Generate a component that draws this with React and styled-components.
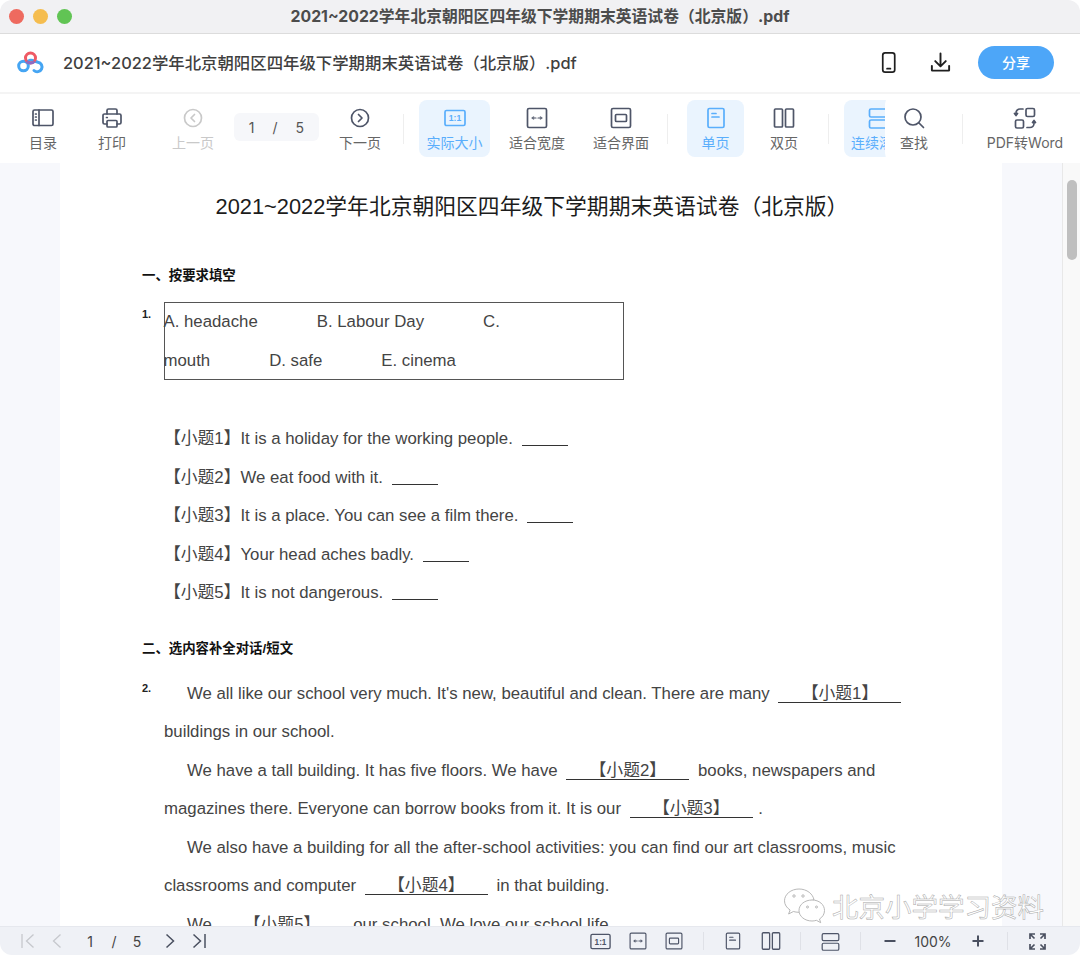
import React from 'react';
import styled, { createGlobalStyle } from 'styled-components';

const Global = createGlobalStyle`
  html, body { margin: 0; padding: 0; background: #fff; }
  * { box-sizing: border-box; }
`;

const UI = `Inter, "Noto Sans CJK SC", sans-serif`;
const DOC = `"Liberation Sans", "Noto Sans CJK SC", sans-serif`;
const INK = '#4e5568';
const BLUE = '#5aaefc';

const Win = styled.div`
  width: 1080px; height: 955px; display: flex; flex-direction: column;
  border-radius: 12px; overflow: hidden; background: #fff; font-family: ${UI}; position: relative;
`;
const TitleBar = styled.div`
  height: 34px; flex: none; background: #f1f1f3; border-bottom: 1px solid #dcdcdc;
  display: flex; align-items: center; justify-content: center; position: relative;
  font-size: 15.8px; font-weight: 700; color: #4c4c4c; padding-bottom: 2px;
`;
const Lights = styled.div`
  position: absolute; left: 9px; top: 9px; display: flex; gap: 9px;
`;
const Light = styled.span`
  width: 15px; height: 15px; border-radius: 50%; background: ${p => p.$c};
`;
const Header = styled.div`
  height: 60px; flex: none; display: flex; align-items: center; padding: 0 26px 2px 16px;
  border-bottom: 2px solid #f4f4f4;
`;
const DocName = styled.div`
  font-size: 16.4px; font-weight: 500; color: #3f3f3f; margin-left: 18px; flex: 1;
`;
const HeadIcon = styled.div`
  width: 52px; display: flex; justify-content: center; align-items: center;
`;
const ShareBtn = styled.button`
  width: 76px; height: 33px; margin-left: 12px; border: 0; border-radius: 17px; background: #4da6f8;
  color: #fff; font: 500 14px ${UI};
`;
const Toolbar = styled.div`
  height: 69px; flex: none; display: flex; position: relative; background: #fff;
`;
const ToolScroll = styled.div`
  width: 895px; flex: none; display: flex; align-items: center; padding-left: 14px; overflow: hidden;
`;
const ToolRight = styled.div`
  width: 195px; flex: none; margin-left: -10px; display: flex; align-items: center; background: #fff;
  border-radius: 10px 0 0 10px; position: relative;
`;
const Tool = styled.div`
  width: ${p => p.$w}px; height: 57px; flex: none; border-radius: 8px;
  display: flex; flex-direction: column; align-items: center; padding-top: 6px; gap: 3px;
  background: ${p => (p.$on ? '#eaf4fe' : 'transparent')};
  color: ${p => (p.$on ? BLUE : p.$off ? '#c9c9c9' : '#666')};
  font-size: 14px; line-height: 20px; white-space: nowrap;
  svg { flex: none; }
`;
const ToolDiv = styled.span`
  width: 1px; height: 30px; flex: none; background: #eee; margin: 0 ${p => p.$r}px 0 ${p => p.$l}px;
`;
const Pager = styled.div`
  width: 85px; height: 28px; flex: none; margin-top: -3px; border-radius: 6px; background: #f6f7fa;
  display: flex; justify-content: center; gap: 18px; align-items: center; font-size: 14px; color: #555;
`;
const Main = styled.div`
  flex: 1; min-height: 0; display: flex; background: #f7f8fc; overflow: hidden; position: relative;
`;
const Gutter = styled.div`
  width: ${p => p.$w}px; flex: none;
`;
const Page = styled.div`
  width: 942px; flex: none; background: #fff; padding: 27px 100px 0 82px; font-family: ${DOC}; color: #444;
  font-size: 16.8px;
`;
const DocTitle = styled.h1`
  margin: 0 -10px 41px 10px; font: 400 21.8px/34px ${DOC}; color: #1c1c1c; text-align: center; white-space: nowrap;
`;
const Heading = styled.h2`
  margin: ${p => p.$top || 0}px 0 0; font: 700 13.4px/22px ${DOC}; color: #111;
`;
const Item = styled.div`
  display: grid; grid-template-columns: 22px 1fr; margin-top: ${p => p.$top}px;
`;
const Num = styled.span`
  font: 700 11px/16px ${DOC}; color: #222; padding-top: ${p => p.$pad}px;
`;
const Box = styled.div`
  width: 460px; height: 78px; border: 1.5px solid #555; margin-bottom: 40px;
`;
const OptRow = styled.div`
  display: flex; gap: 59px; height: 38.5px; line-height: 37px; white-space: nowrap; margin-left: -1.5px;
`;
const Line = styled.div`
  height: 38.5px; line-height: 38.5px; white-space: nowrap; padding-left: ${p => p.$in || 0}px;
`;
const Blank = styled.span`
  display: inline-block; width: ${p => p.$w}px; height: 18px; line-height: 18px; border-bottom: 1.5px solid #333;
  margin: 0 ${p => p.$r ?? 0}px 0 ${p => p.$l ?? 4}px; text-align: center;
  &:empty { vertical-align: -2px; }
`;
const Track = styled.div`
  width: 18px; flex: none; background: #f9f9f9; border-left: 1px solid #e8e8e8; padding: 17px 0 0 4px;
`;
const Thumb = styled.div`
  width: 10px; height: 80px; border-radius: 5px; background: #bfbfbf;
`;
const Watermark = styled.div`
  position: absolute; right: 36px; bottom: 1px; display: flex; align-items: center; gap: 5px;
  font: 400 26.5px/34px "Noto Sans CJK SC", sans-serif; color: #fff; -webkit-text-stroke: 0.5px #a8a8a8;
`;
const Footer = styled.div`
  height: 29px; flex: none; background: #eff1f6; border-top: 1px solid #e6e8ee; display: flex;
  justify-content: space-between; align-items: center; padding: 0 20px 0 14px; font-size: 14px; color: #444;
`;
const FootGroup = styled.div`
  display: flex; align-items: center;
`;
const Slot = styled.div`
  width: ${p => p.$w}px; flex: none; display: flex; justify-content: center; align-items: center;
`;
const FootDiv = styled.span`
  width: 1px; height: 18px; background: #dfe1e7;
`;

const S = ({ s = 24, c = INK, w = 1.7, vb = 24, children }) => (
  <svg width={s} height={s} viewBox={`0 0 ${vb} ${vb}`} fill="none" stroke={c} strokeWidth={w} strokeLinecap="round" strokeLinejoin="round">{children}</svg>
);

const IconToc = (p) => <S {...p}><rect x="2" y="4" width="20" height="15.5" rx="1.5"/><path d="M8 4v15.5"/><path d="M4.5 8h.8M4.5 11h.8M4.5 14h.8"/></S>;
const IconPrint = (p) => <S {...p}><path d="M7 8V4.5A1.5 1.5 0 0 1 8.5 3h7A1.5 1.5 0 0 1 17 4.5V8"/><path d="M7 18H4.5A1.5 1.5 0 0 1 3 16.500v-7A1.5 1.5 0 0 1 4.500 8h15A1.5 1.5 0 0 1 21 9.500v7a1.5 1.5 0 0 1-1.500 1.500H17"/><rect x="7" y="14.500" width="10" height="6.500" rx="1"/><path d="M6.500 11.500h.8"/></S>;
const IconCircleL = (p) => <S {...p}><circle cx="12" cy="12" r="8.500"/><path d="M13.500 8.500 10 12l3.500 3.500"/></S>;
const IconCircleR = (p) => <S {...p}><circle cx="12" cy="12" r="8.500"/><path d="M10.500 8.500 14 12l-3.500 3.500"/></S>;
const IconActual = ({ c = INK, s = 24, w = 1.7 }) => (
  <svg width={s} height={s} viewBox="0 0 24 24" fill="none">
    <rect x="2" y="4.500" width="20" height="15" rx="1.500" stroke={c} strokeWidth={w}/>
    <text x="12" y="15.200" textAnchor="middle" fontFamily={DOC} fontSize="8.600" fontWeight="700" fill={c}>1:1</text>
  </svg>
);
const IconWidth = ({ c = INK, s = 24, w = 1.7 }) => (
  <S s={s} c={c} w={w}>
    <rect x="2.500" y="2.500" width="19" height="19" rx="1.500"/>
    <path d="M8.500 12h2.500M13 12h2.500" strokeWidth="1.200"/>
    <path d="M8.500 10.600 6.500 12l2 1.400ZM15.500 10.600l2 1.400-2 1.400Z" fill={c} strokeWidth="0.400"/>
  </S>
);
const IconFit = ({ c = INK, s = 24, w = 1.7 }) => (
  <S s={s} c={c} w={w}><rect x="2.500" y="2.500" width="19" height="19" rx="1.500"/><rect x="6.500" y="8.500" width="11" height="7" rx="1"/></S>
);
const IconSingle = (p) => <S {...p}><rect x="4" y="2.500" width="16" height="19" rx="1.500"/><path d="M8 7.500h4M8 11h7"/></S>;
const IconDouble = (p) => <S {...p}><rect x="2.500" y="3" width="8" height="18" rx="1"/><rect x="13.500" y="3" width="8" height="18" rx="1"/></S>;
const IconCont = (p) => <S {...p}><rect x="2.500" y="3" width="19" height="8" rx="1.500"/><rect x="2.500" y="14" width="19" height="8" rx="1.500"/></S>;
const IconSearch = (p) => <S {...p}><circle cx="11" cy="11" r="8"/><path d="m17 17 4.500 4.500"/></S>;
const IconConvert = (p) => (
  <S {...p}>
    <rect x="13" y="2.500" width="8.500" height="8" rx="1.500"/>
    <rect x="2.500" y="14" width="8" height="8" rx="1.500"/>
    <path d="M10 3H7a4 4 0 0 0-4 4v2M1.500 7.500 3 9.500l1.500-2"/>
    <path d="M14 21.500h3a4 4 0 0 0 4-4V15M19.500 16.500 21 14.500l1.500 2"/>
  </S>
);
const IconPhone = () => <S s={23} c="#1f1f1f" w={1.8}><rect x="6" y="2" width="12.500" height="20" rx="2.500"/><path d="M10.500 18.500h3.500"/></S>;
const IconDownload = () => <S s={23} c="#1f1f1f" w={2}><path d="M12 2.500v13M6.500 10.500 12 16l5.500-5.500"/><path d="M3 15.500v4.500a.5.5 0 0 0 .5.5h17a.5.5 0 0 0 .5-.5v-4.500"/></S>;

const Logo = () => (
  <svg width="29" height="26" viewBox="0 0 29 26" fill="none">
    <circle cx="7.500" cy="17" r="4.800" stroke="#45a5f3" strokeWidth="3"/>
    <path d="M11 13.500a5 5 0 0 1 7-1.500l4 1.200a4.800 4.800 0 1 1-4 8.300" stroke="#45a5f3" strokeWidth="3" strokeLinecap="round"/>
    <circle cx="14.500" cy="9" r="5" stroke="#ef5a64" strokeWidth="3"/>
    <path d="M10.500 12.500a6 6 0 0 0 8 0" stroke="#8c6bc4" strokeWidth="3"/>
  </svg>
);

const Wechat = () => (
  <svg width="44" height="38" viewBox="0 0 44 38" fill="#fff" stroke="#b0b0b0" strokeWidth="0.900">
    <path d="M16 2C8 2 1.500 7.300 1.500 13.800c0 3.800 2.200 7 5.600 9.200L5.600 27l4.800-2.500c1.700.5 3.500.8 5.600.8.600 0 1.200 0 1.800-.1C17 24 24 13 31 13 30 7 24 2 16 2Z"/>
    <path d="M29 13c-7.200 0-13 4.600-13 10.500S21.800 34 29 34c1.500 0 3-.2 4.400-.7l4.300 2.400-1.200-3.700c3.200-2 5-5 5-8.500C41.500 17.600 36.200 13 29 13Z"/>
    <circle cx="11" cy="9" r="1.200"/><circle cx="20" cy="9" r="1.200"/><circle cx="24.500" cy="20" r="1"/><circle cx="33.500" cy="20" r="1"/>
  </svg>
);

const FirstIco = ({ c }) => <svg width="16" height="16" viewBox="0 0 16 16" fill="none" stroke={c} strokeWidth="1.300"><path d="M2 1v14M13.500 1.500 6.500 8l7 6.500"/></svg>;
const PrevIco = ({ c }) => <svg width="14" height="16" viewBox="0 0 14 16" fill="none" stroke={c} strokeWidth="1.300"><path d="M10.500 1.500 3.500 8l7 6.500"/></svg>;
const NextIco = ({ c }) => <svg width="14" height="16" viewBox="0 0 14 16" fill="none" stroke={c} strokeWidth="1.500"><path d="M3.500 1.500 10.500 8l-7 6.500"/></svg>;
const LastIco = ({ c }) => <svg width="16" height="16" viewBox="0 0 16 16" fill="none" stroke={c} strokeWidth="1.500"><path d="M2.500 1.500 9.500 8l-7 6.500M14 1v14"/></svg>;
const Minus = () => <svg width="14" height="14" viewBox="0 0 14 14" stroke="#4a5060" strokeWidth="2"><path d="M1.500 7h11"/></svg>;
const Plus = () => <svg width="14" height="14" viewBox="0 0 14 14" stroke="#4a5060" strokeWidth="2"><path d="M1.500 7h11M7 1.500v11"/></svg>;
const Full = () => (
  <svg width="17" height="17" viewBox="0 0 17 17" fill="none" stroke="#4a5060" strokeWidth="1.700">
    <path d="M1 6V1h5M1.500 1.500l4 4M16 6V1h-5M15.500 1.500l-4 4M1 11v5h5M1.500 15.500l4-4M16 11v5h-5M15.500 15.500l-4-4"/>
  </svg>
);

export default function App() {
  const name = '2021~2022学年北京朝阳区四年级下学期期末英语试卷（北京版）';
  return (
    <Win>
      <Global />
      <TitleBar>
        <Lights>
          <Light $c="#ee6a5f" /><Light $c="#f5bd4f" /><Light $c="#61c454" />
        </Lights>
        {name}.pdf
      </TitleBar>
      <Header>
        <Logo />
        <DocName>{name}.pdf</DocName>
        <HeadIcon><IconPhone /></HeadIcon>
        <HeadIcon><IconDownload /></HeadIcon>
        <ShareBtn>分享</ShareBtn>
      </Header>
      <Toolbar>
        <ToolScroll>
          <Tool $w={58}><IconToc />目录</Tool>
          <Tool $w={80}><IconPrint />打印</Tool>
          <Tool $w={82} $off><IconCircleL c="#c9c9c9" />上一页</Tool>
          <Pager><span>1</span><span>/</span><span>5</span></Pager>
          <Tool $w={82}><IconCircleR />下一页</Tool>
          <ToolDiv $l={2} $r={15} />
          <Tool $w={71} $on><IconActual c={BLUE} />实际大小</Tool>
          <Tool $w={94}><IconWidth />适合宽度</Tool>
          <Tool $w={74}><IconFit />适合界面</Tool>
          <ToolDiv $l={9} $r={19} />
          <Tool $w={57} $on><IconSingle c={BLUE} />单页</Tool>
          <Tool $w={80}><IconDouble />双页</Tool>
          <ToolDiv $l={4} $r={15} />
          <Tool $w={70} $on><IconCont c={BLUE} />连续滚动</Tool>
        </ToolScroll>
        <ToolRight>
          <Tool $w={58}><IconSearch />查找</Tool>
          <ToolDiv $l={19} $r={17} />
          <Tool $w={90}><IconConvert />PDF转Word</Tool>
        </ToolRight>
      </Toolbar>
      <Main>
        <Gutter $w={60} />
        <Page>
          <DocTitle>{name}</DocTitle>
          <Heading>一、按要求填空</Heading>
          <Item $top={15}>
            <Num $pad={4}>1.</Num>
            <div>
              <Box>
                <OptRow><span>A. headache</span><span>B. Labour Day</span><span>C.</span></OptRow>
                <OptRow><span>mouth</span><span>D. safe</span><span>E. cinema</span></OptRow>
              </Box>
              <Line>【小题1】It is a holiday for the working people. <Blank $w={46} /></Line>
              <Line>【小题2】We eat food with it. <Blank $w={46} /></Line>
              <Line>【小题3】It is a place. You can see a film there. <Blank $w={46} /></Line>
              <Line>【小题4】Your head aches badly. <Blank $w={46} /></Line>
              <Line>【小题5】It is not dangerous. <Blank $w={46} /></Line>
            </div>
          </Item>
          <Heading $top={25}>二、选内容补全对话/短文</Heading>
          <Item $top={15}>
            <Num $pad={5}>2.</Num>
            <div>
              <Line $in={23}>We all like our school very much. It's new, beautiful and clean. There are many <Blank $w={123} $l={4} $r={0}>【小题1】</Blank></Line>
              <Line>buildings in our school.</Line>
              <Line $in={23}>We have a tall building. It has five floors. We have <Blank $w={123} $r={4}>【小题2】</Blank> books, newspapers and</Line>
              <Line>magazines there. Everyone can borrow books from it. It is our <Blank $w={123} $r={1}>【小题3】</Blank> .</Line>
              <Line $in={23}>We also have a building for all the after-school activities: you can find our art classrooms, music</Line>
              <Line>classrooms and computer <Blank $w={123} $r={4}>【小题4】</Blank> in that building.</Line>
              <Line $in={23}>We <Blank $w={123} $l={4} $r={5}>【小题5】</Blank> our school. We love our school life.</Line>
            </div>
          </Item>
        </Page>
        <Gutter $w={60} />
        <Track><Thumb /></Track>
        <Watermark><Wechat />北京小学学习资料</Watermark>
      </Main>
      <Footer>
        <FootGroup>
          <Slot $w={28}><FirstIco c="#c6c8cd" /></Slot>
          <Slot $w={30}><PrevIco c="#c6c8cd" /></Slot>
          <Slot $w={36}>1</Slot>
          <Slot $w={12}>/</Slot>
          <Slot $w={34}>5</Slot>
          <Slot $w={32}><NextIco c="#4a5060" /></Slot>
          <Slot $w={26}><LastIco c="#4a5060" /></Slot>
        </FootGroup>
        <FootGroup>
          <Slot $w={37}><IconActual s={23} w={1.4} /></Slot>
          <Slot $w={37}><IconWidth s={20} w={1.4} /></Slot>
          <Slot $w={36}><IconFit s={20} w={1.4} /></Slot>
          <Slot $w={22}><FootDiv /></Slot>
          <Slot $w={38}><IconSingle s={20} w={1.4} /></Slot>
          <Slot $w={38}><IconDouble s={22} w={1.4} /></Slot>
          <Slot $w={20}><FootDiv /></Slot>
          <Slot $w={40}><IconCont s={21} w={1.4} /></Slot>
          <Slot $w={20}><FootDiv /></Slot>
          <Slot $w={40}><Minus /></Slot>
          <Slot $w={46}>100%</Slot>
          <Slot $w={44}><Plus /></Slot>
          <Slot $w={14}><FootDiv /></Slot>
          <Slot $w={46}><Full /></Slot>
        </FootGroup>
      </Footer>
    </Win>
  );
}
